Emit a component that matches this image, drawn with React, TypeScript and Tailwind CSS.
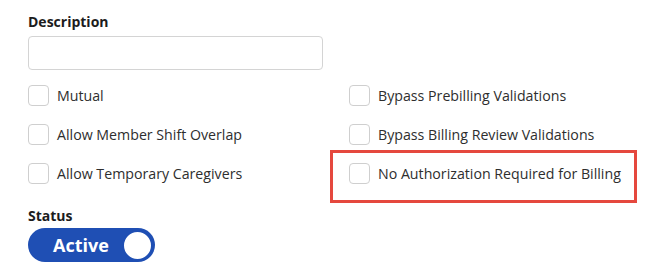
const left = ["Mutual", "Allow Member Shift Overlap", "Allow Temporary Caregivers"];
const right = [
  "Bypass Prebilling Validations",
  "Bypass Billing Review Validations",
  "No Authorization Required for Billing",
];

function CheckRow({ label, highlight }: { label: string; highlight?: boolean }) {
  return (
    <div className="relative flex h-[21px] items-center gap-2">
      {highlight && (
        <div className="pointer-events-none absolute -top-[13px] -bottom-[19px] -left-[19px] w-[307px] border-[3px] border-[#e5483e]" />
      )}
      <span className="h-[21px] w-[21px] shrink-0 rounded-[4px] border border-[#cfcfcf] bg-white" />
      <span className="text-[14.2px] leading-5 text-[#2e2e2e]">{label}</span>
    </div>
  );
}

export default function App() {
  return (
    <div className="h-[279px] w-[663px] bg-white pt-[12px] pl-[28px] font-['Open_Sans',sans-serif]">
      <label className="block text-[14px] leading-5 font-bold text-[#1c1c1c]">Description</label>
      <input
        type="text"
        className="mt-[4px] block h-[34px] w-[295px] rounded-[4px] border border-[#d4d4d4] bg-white px-2 outline-none"
      />
      <div className="mt-[15px] grid grid-cols-[321px_1fr] gap-y-[18px]">
        {left.map((l, i) => (
          <>
            <CheckRow key={l} label={l} />
            <CheckRow key={right[i]} label={right[i]} highlight={i === 2} />
          </>
        ))}
      </div>
      <div className="mt-[22px] text-[14px] leading-5 font-bold text-[#1c1c1c]">Status</div>
      <button className="mt-[2px] flex h-[34px] w-[127px] items-center justify-between rounded-full bg-[#1f4fb4] pr-[2px] pl-[25px]">
        <span className="text-[18px] leading-none font-bold text-white">Active</span>
        <span className="h-[31px] w-[31px] rounded-full border-2 border-[#1f4fb4] bg-white" />
      </button>
    </div>
  );
}
